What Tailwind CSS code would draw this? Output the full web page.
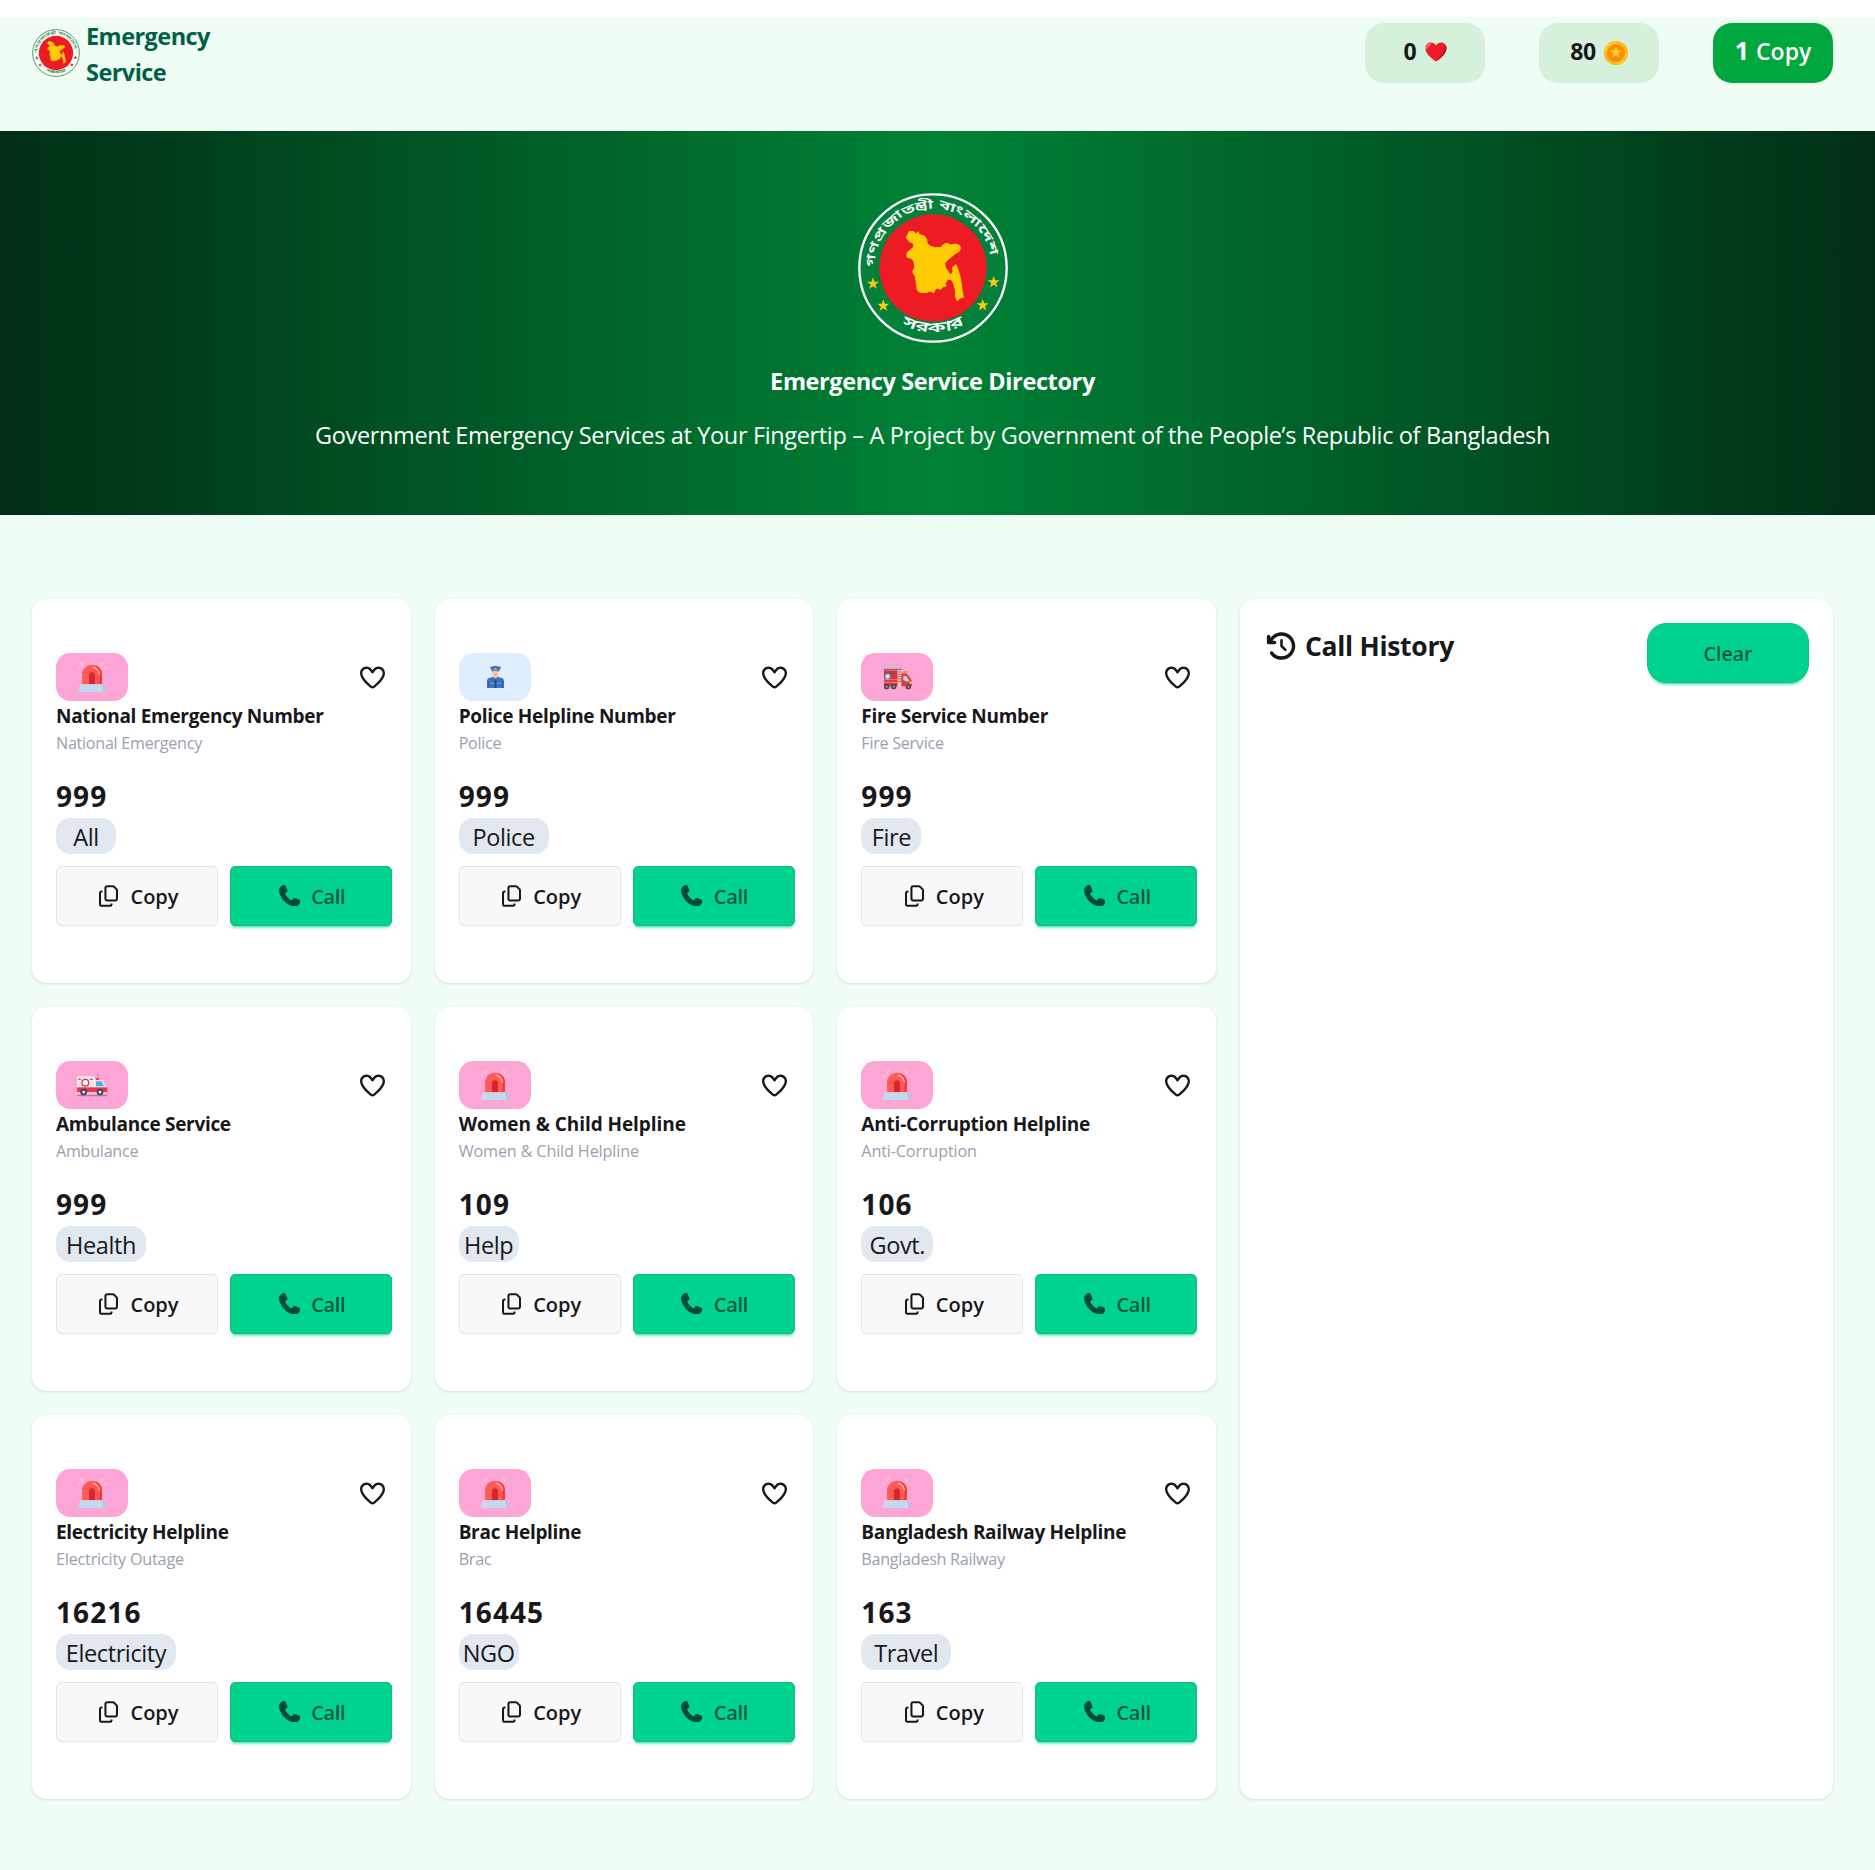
<!DOCTYPE html>
<html lang="en">
<head>
<meta charset="utf-8">
<title>Emergency Service Directory</title>
<script src="https://cdn.jsdelivr.net/npm/@tailwindcss/browser@4"></script>
</head>
<body class="bg-white font-['Open_Sans','Noto_Sans',sans-serif] text-[#18181b]">

<!-- Shared symbols -->
<svg class="hidden" xmlns="http://www.w3.org/2000/svg">
  <symbol id="map" viewBox="54 39 450 450">
    <circle cx="279" cy="264" r="161" fill="#ed1c24"/>
    <path fill="#ffcb05" stroke="#ffcb05" stroke-width="3" stroke-linejoin="round" d="M199 173L208 154L222 155L229 162L234 155L238 164L252 167L260 178L261 190L270 198L285 203L303 202L311 193L322 190L332 195L345 192L358 196L362 205L356 216L345 221L335 230L322 241L314 250L316 262L324 274L331 285L339 276L338 262L348 254L354 270L360 290L364 312L366 330L370 352L360 354L352 363L347 352L347 335L343 318L338 303L330 297L322 299L316 310L318 318L310 319L302 328L292 324L285 329L281 338L270 333L258 338L240 337L232 331L229 310L226 290L218 275L224 262L222 245L214 235L201 232L201 218L212 209L222 200L220 190L208 185Z"/>
  </symbol>
  <symbol id="star" viewBox="-10 -10 20 20"><path d="M0-10L2.4-3.1 9.5-3.1 3.8 1.2 5.9 8.1 0 4-5.9 8.1-3.8 1.2-9.5-3.1-2.4-3.1z"/></symbol>
  <symbol id="heart" viewBox="0 0 512 512"><path d="M378.9 80c-27.3 0-53 13.1-69 35.2l-34.4 47.6c-4.5 6.2-11.7 9.9-19.4 9.9s-14.9-3.7-19.4-9.9l-34.4-47.6c-16-22.1-41.7-35.2-69-35.2-47 0-85.1 38.1-85.1 85.1 0 49.9 32 98.4 68.1 142.3 41.1 50 91.4 94 125.9 120.3 3.2 2.4 7.9 4.2 14 4.2s10.8-1.8 14-4.2c34.5-26.3 84.8-70.4 125.9-120.3 36.2-43.9 68.1-92.4 68.1-142.3 0-47-38.1-85.1-85.1-85.1zM271 87.1c25-34.6 65.2-55.1 107.9-55.1 73.5 0 133.1 59.6 133.1 133.1 0 68.6-42.9 128.9-79.1 172.8-44.1 53.6-97.3 100.1-133.8 127.9-12.3 9.4-27.5 14.1-43.1 14.1s-30.8-4.7-43.1-14.1C176.4 438 123.2 391.5 79.1 338 42.9 294.1 0 233.7 0 165.1 0 91.6 59.6 32 133.1 32 175.8 32 216 52.5 241 87.1l15 20.7 15-20.7z"/></symbol>
  <symbol id="copy" viewBox="0 0 448 512"><path d="M384 336l-192 0c-8.8 0-16-7.2-16-16l0-256c0-8.8 7.2-16 16-16l133.5 0c4.2 0 8.3 1.7 11.3 4.7l58.5 58.5c3 3 4.7 7.1 4.7 11.3L400 320c0 8.8-7.2 16-16 16zM192 384l192 0c35.3 0 64-28.7 64-64l0-197.5c0-17-6.7-33.3-18.7-45.3L370.7 18.7C358.7 6.7 342.5 0 325.5 0L192 0c-35.3 0-64 28.7-64 64l0 256c0 35.3 28.7 64 64 64zM64 128c-35.3 0-64 28.7-64 64L0 448c0 35.3 28.7 64 64 64l192 0c35.3 0 64-28.7 64-64l0-16-48 0 0 16c0 8.8-7.2 16-16 16L64 464c-8.8 0-16-7.2-16-16l0-256c0-8.8 7.2-16 16-16l16 0 0-48-16 0z"/></symbol>
  <symbol id="phone" viewBox="0 0 512 512"><path d="M160.2 25C152.3 6.1 131.7-3.9 112.1 1.4l-5.5 1.5c-64.6 17.6-119.8 80.2-103.7 156.4 37.1 175 174.8 312.7 349.8 349.8 76.3 16.2 138.8-39.1 156.4-103.7l1.5-5.5c5.4-19.7-4.7-40.3-23.5-48.1l-97.3-40.5c-16.5-6.9-35.6-2.1-47 11.8l-38.6 47.2C233.9 335.4 177.3 277 144.8 205.3L189 169.3c13.9-11.3 18.6-30.4 11.8-47L160.2 25z"/></symbol>
  <symbol id="siren" viewBox="18 39 216 144">
    <path d="M85 80L91 87M92 67L99 79M101 65L102 71M168 80L161 87M160 67L153 79M151 65L150 71" stroke="#ffe0c0" stroke-width="2.6" fill="none"/>
    <path d="M96 133V104a30 30 0 0 1 60 0V133Z" fill="#ff5a55"/>
    <path d="M148 133V104c0-14-6-23-14-28 14 4 22 14 22 28V133Z" fill="#f03c3c"/>
    <path d="M130 82c10 3 17 10 18 20" stroke="#ffb3a6" stroke-width="4" stroke-linecap="round" fill="none"/>
    <path d="M117 133V106a9 9 0 0 1 18 0V133Z" fill="#d92332"/>
    <path d="M90 133H162L168 156H83Z" fill="#c3d9ee"/><path d="M156 133H162L168 156H162Z" fill="#a9c4de"/>
  </symbol>
  <symbol id="police" viewBox="102 189 216 144">
    <path d="M186 294V272q0-6 6-8l14-4h12l13 4q6 2 6 8V294Z" fill="#3b74c1"/>
    <path d="M206 254h11v8l-5 5-6-5z" fill="#f0b594"/>
    <path d="M211 267h3V294h-6V270Z" fill="#244a8a"/>
    <path d="M201 240h20v11q-2 10-10 12-8-2-10-12Z" fill="#fbc9ab"/>
    <path d="M200 240h23l-1 5q-10-4-21 0Z" fill="#a9786a"/>
    <path d="M195 232q16-9 33 0l-4 9q-12-5-25 0Z" fill="#3a6fbb"/>
    <path d="M208 233h6v4h-6zM197 279h9v2h-9zM218 279h9v2h-9z" fill="#7fb2ec"/>
    <path d="M208 253q3 3 7 0" stroke="#d3555a" stroke-width="1.6" fill="none"/>
    <path d="M190 276V294M233 276V294" stroke="#28559b" stroke-width="2"/>
  </symbol>
  <symbol id="fire" viewBox="93 189 216 144">
    <path d="M161 226H215M161 236H215M165 226V238M174 226V236M183 226V236M192 226V236M201 226V236M210 226V236" stroke="#c4bfcc" stroke-width="3" fill="none"/>
    <path d="M161 238H216" stroke="#6d6274" stroke-width="3"/>
    <path d="M162 241H203V289H162Z" fill="#d9303a"/>
    <path d="M203 241H214V289H203Z" fill="#efd0cd"/><path d="M203 246h11M203 253h11M203 260h11M203 267h11M203 274h11" stroke="#d9303a" stroke-width="2.5"/>
    <path d="M214 250H231L246 273V289H214Z" fill="#e23a40"/>
    <path d="M220 258H229L239 274H226L220 268Z" fill="#a9d8f2"/><path d="M221 243h10v8h-10z" fill="#ff8a35"/>
    <path d="M238 274h8v7h-8z" fill="#ffc04a"/>
    <path d="M162 269H203M162 277H203" stroke="#f3b9b4" stroke-width="2"/>
    <path d="M165 247H199V251H183V262H167Z" fill="#8f4954"/><circle cx="173" cy="259" r="8" fill="#8fd0e4"/><circle cx="173" cy="259" r="4" fill="#d8f1f6"/>
    <g fill="#4c4552"><circle cx="170" cy="290" r="8"/><circle cx="191" cy="290" r="8"/><circle cx="235" cy="290" r="8"/></g>
    <g fill="#aaa3b0"><circle cx="170" cy="290" r="3"/><circle cx="191" cy="290" r="3"/><circle cx="235" cy="290" r="3"/></g>
  </symbol>
  <symbol id="ambulance" viewBox="18 63 216 144">
    <path d="M133 108l4 4M150 107l-4 4M142 103v5M153 115h-3M131 116h4" stroke="#f0506a" stroke-width="2"/>
    <path d="M138 121v-5q4-5 9 0v5z" fill="#e8364f"/>
    <path d="M81 109H135V120H158L166 137L172 143V158H81Z" fill="#e9e6ec"/>
    <path d="M81 142H172V156H81Z" fill="#e8364f"/>
    <path d="M138 124H155L162 139H138Z" fill="#46aee6"/>
    <circle cx="106" cy="128" r="10" fill="#fff" stroke="#e0344d" stroke-width="4"/>
    <path d="M85 116h7v4h-7zM120 116h8v4h-8z" fill="#d9405a"/>
    <path d="M81 167H172" stroke="#7b6b80" stroke-width="2.5"/>
    <g fill="#3d3f55"><circle cx="101" cy="156" r="10"/><circle cx="150" cy="156" r="10"/></g>
    <g fill="#f4f4f8"><circle cx="101" cy="156" r="4.5"/><circle cx="150" cy="156" r="4.5"/></g>
  </symbol>
</svg>

<div class="mt-[17px] min-h-[1853px] bg-green-50">
  <header class="flex h-[114px] items-start justify-between pl-8 pr-[42px] pt-1.5">
    <div class="flex gap-1.5">
      <svg class="mt-1.5 size-12 shrink-0" viewBox="54 39 450 450">
        <circle cx="279" cy="264" r="219" fill="#f8fdf9" stroke="#4c9c66" stroke-width="9"/>
        <use href="#map" x="54" y="39" width="450" height="450"/>
        <path id="arcTopS" d="M103 262A176 176 0 0 1 455 262" fill="none"/>
        <path id="arcBottomS" d="M150 407A193 193 0 0 0 408 407" fill="none"/>
        <g fill="#2f8a4c" font-family="'Noto Sans Bengali','Noto Sans',sans-serif" font-weight="600" font-size="36">
          <text><textPath href="#arcTopS" textLength="518" lengthAdjust="spacingAndGlyphs">গণপ্রজাতন্ত্রী বাংলাদেশ</textPath></text>
          <text text-anchor="middle" font-size="42"><textPath href="#arcBottomS" startOffset="50%" textLength="195" lengthAdjust="spacingAndGlyphs">সরকার</textPath></text>
        </g>
        <g fill="#ed1c24"><use href="#star" x="80" y="292" width="38" height="38"/><use href="#star" x="111" y="358" width="38" height="38"/><use href="#star" x="442" y="288" width="38" height="38"/><use href="#star" x="409" y="357" width="38" height="38"/></g>
      </svg>
      <p class="-mt-[5px] w-[130px] text-[23.5px] leading-9 font-bold tracking-[-0.55px] text-emerald-800">Emergency Service</p>
    </div>
    <div class="flex gap-[54px] text-[23px] font-bold">
      <div class="flex h-[60px] w-[120px] items-center justify-center gap-2 rounded-[19.2px] bg-[#d5f1dc] pb-1">
        <span>0</span>
        <svg class="mt-0.5 h-[20px] w-[22px]" viewBox="0 0 44 40"><path d="M22 39C10 31 1 22 1 12 1 5 6 1 11.500 1 16 1 20 3.500 22 7 24 3.500 28 1 32.500 1 38 1 43 5 43 12 43 22 34 31 22 39Z" fill="#ee1c25"/><path d="M43 12C43 22 34 31 22 39 30 30 38 22 41 6Q43 9 43 12Z" fill="#bb1420"/><path d="M4 12Q5 5 11 4" stroke="#ff7f80" stroke-width="3" stroke-linecap="round" fill="none"/></svg>
      </div>
      <div class="flex h-[60px] w-[120px] items-center justify-center gap-2 rounded-[19.2px] bg-[#d5f1dc] pb-1">
        <span class="tracking-[-0.3px]">80</span>
        <svg class="mt-1 size-6" viewBox="0 0 48 48"><circle cx="24" cy="24" r="24" fill="#fbb816"/><path d="M24 0A24 24 0 0 0 0 24H24ZM48 24A24 24 0 0 1 24 48V24Z" fill="#fdc62b"/><circle cx="24" cy="24" r="18" fill="#f98b00"/><use href="#star" x="11" y="10" width="26" height="26" fill="#ffd02e"/></svg>
      </div>
      <div class="flex h-[60px] w-[120px] items-center justify-center gap-[7px] rounded-[19.2px] bg-green-600 pb-1 font-semibold text-white">
        <span class="text-[25px] font-bold">1</span><span>Copy</span>
      </div>
    </div>
  </header>

  <section class="flex h-96 flex-col items-center bg-linear-to-r/srgb from-green-950 via-green-700 to-green-950 pr-[10px] pt-[62px] text-white">
    <svg class="size-[150px]" viewBox="54 39 450 450">
      <circle cx="279" cy="264" r="221" fill="#04803a" stroke="#fff" stroke-width="7"/>
      <use href="#map" x="54" y="39" width="450" height="450"/>
      <path id="arcTop" d="M103 262A176 176 0 0 1 455 262" fill="none"/>
      <path id="arcBottom" d="M150 407A193 193 0 0 0 408 407" fill="none"/>
      <g fill="#fff" font-family="'Noto Sans Bengali','Noto Sans',sans-serif" font-weight="600" font-size="36">
        <text><textPath href="#arcTop" textLength="518" lengthAdjust="spacingAndGlyphs">গণপ্রজাতন্ত্রী বাংলাদেশ</textPath></text>
        <text text-anchor="middle" font-size="42"><textPath href="#arcBottom" startOffset="50%" textLength="195" lengthAdjust="spacingAndGlyphs">সরকার</textPath></text>
      </g>
      <g fill="#f8cb12"><use href="#star" x="80" y="292" width="38" height="38"/><use href="#star" x="111" y="358" width="38" height="38"/><use href="#star" x="442" y="288" width="38" height="38"/><use href="#star" x="409" y="357" width="38" height="38"/></g>
    </svg>
    <h1 class="mt-5 text-[23.5px] leading-9 font-bold tracking-[-0.38px]">Emergency Service Directory</h1>
    <p class="mt-[18px] text-[23.5px] leading-9 tracking-[-0.35px]">Government Emergency Services at Your Fingertip – A Project by Government of the People’s Republic of Bangladesh</p>
  </section>

  <main class="flex gap-6 pl-8 pr-[42px] pt-[84px]">
    <div id="cards" class="grid h-[1200px] w-[1184px] shrink-0 grid-cols-3 grid-rows-3 gap-6"></div>
    <aside class="flex h-[1200px] flex-1 items-start justify-between rounded-[14.4px] bg-white pl-[26px] pr-6 pt-6 shadow-sm">
      <h2 class="flex items-center gap-2 pt-[3px] text-[26.5px] leading-10 font-bold tracking-[-0.3px] whitespace-nowrap">
        <svg class="h-7 w-[31px] shrink-0" viewBox="0 0 576 512" fill="currentColor"><path d="M288 64c106 0 192 86 192 192S394 448 288 448c-65.200 0-122.900-32.500-157.600-82.300-10.100-14.500-30.100-18-44.600-7.900s-18 30.100-7.900 44.600C124.100 468.600 201 512 288 512 429.400 512 544 397.400 544 256S429.400 0 288 0C202.300 0 126.500 42.100 80 106.700L80 80c0-17.700-14.300-32-32-32S16 62.300 16 80l0 112c0 17.700 14.300 32 32 32l112.100 0c17.700 0 32-14.300 32-32s-14.300-32-32-32l-38.300 0C154.900 102.600 217 64 288 64zm24 88c0-13.300-10.700-24-24-24s-24 10.700-24 24l0 104c0 6.400 2.500 12.500 7 17l72 72c9.400 9.400 24.600 9.400 33.900 0s9.400-24.600 0-33.900l-65-65 0-94.100z"/></svg>
        <span>Call History</span>
      </h2>
      <button class="h-[60px] w-[162px] rounded-[19.2px] border border-[#14b982] bg-[#00d390] pt-0.5 text-[19.5px] font-semibold text-[#00563f] shadow-[0_3px_2px_-2px_#00d39060,0_4px_3px_-2px_#00d39070]">Clear</button>
    </aside>
  </main>
</div>

<script>
const wide = 'tracking-[-0.07px]';
const tight = 'tracking-[-0.3px]';
const mid = 'tracking-[-0.2px]';
const snug = 'tracking-[-0.15px]';
const services = [
  ['National Emergency Number', 'National Emergency', '999', 'All', 'w-[60px]', 'siren', tight, tight],
  ['Police Helpline Number', 'Police', '999', 'Police', 'w-[90px]', 'police', tight, tight],
  ['Fire Service Number', 'Fire Service', '999', 'Fire', 'w-[60px]', 'fire', tight, tight],
  ['Ambulance Service', 'Ambulance', '999', 'Health', 'w-[90px]', 'ambulance', tight, tight],
  ['Women &amp; Child Helpline', 'Women &amp; Child Helpline', '109', 'Help', 'w-[60px]', 'siren', wide, snug],
  ['Anti-Corruption Helpline', 'Anti-Corruption', '106', 'Govt.', 'w-[72px]', 'siren', mid, snug],
  ['Electricity Helpline', 'Electricity Outage', '16216', 'Electricity', 'w-[120px]', 'siren', tight, mid],
  ['Brac Helpline', 'Brac', '16445', 'NGO', 'w-[60px]', 'siren', tight, tight],
  ['Bangladesh Railway Helpline', 'Bangladesh Railway', '163', 'Travel', 'w-[90px]', 'siren', tight, tight],
];
document.getElementById('cards').innerHTML = services.map(([title, sub, num, tag, tagWidth, icon, titleTracking, subTracking]) => `
  <article class="rounded-[14.4px] bg-white pl-6 pt-[54px] shadow-sm">
    <div class="flex items-center justify-between pr-[26px]">
      <div class="h-12 w-[72px] rounded-[14.4px] ${icon === 'police' ? 'bg-[#dfeeff]' : 'bg-pink-300'}">
        <svg class="h-12 w-[72px]"><use href="#${icon}"/></svg>
      </div>
      <svg class="size-[25px]" fill="currentColor"><use href="#heart"/></svg>
    </div>
    <h3 class="pt-px text-[19px] leading-[29px] font-bold ${titleTracking} whitespace-nowrap">${title}</h3>
    <p class="text-[16.2px] leading-[25px] ${subTracking} text-gray-400">${sub}</p>
    <p class="mt-[18px] text-[28px] leading-[44px] font-bold tracking-[1.1px]">${num}</p>
    <div class="flex h-9 ${tagWidth} items-center justify-center rounded-[14.4px] bg-slate-200 pt-1 text-[23.5px] tracking-[-0.4px] whitespace-nowrap">${tag}</div>
    <div class="mt-3 flex gap-3 text-[20px] font-semibold">
      <button class="flex h-[60px] w-[162px] items-center justify-center gap-3 rounded-[5px] border border-[#e5e5e5] bg-[#f8f8f8] pl-1 shadow-[0_3px_2px_-2px_#f8f8f8]">
        <svg class="-mt-px h-[22px] w-[19px]" fill="currentColor"><use href="#copy"/></svg><span class="pt-0.5">Copy</span>
      </button>
      <button class="flex h-[60px] w-[162px] items-center justify-center gap-[11px] rounded-[5px] border border-[#14b982] bg-[#00d390] pl-0.5 text-[#00563f] shadow-[0_3px_2px_-2px_#00d39060,0_4px_3px_-2px_#00d39070]">
        <svg class="-mt-px size-[21.5px] text-[#004c39]" fill="currentColor"><use href="#phone"/></svg><span class="pt-0.5 tracking-[-0.3px]">Call</span>
      </button>
    </div>
  </article>`).join('');
</script>
</body>
</html>
